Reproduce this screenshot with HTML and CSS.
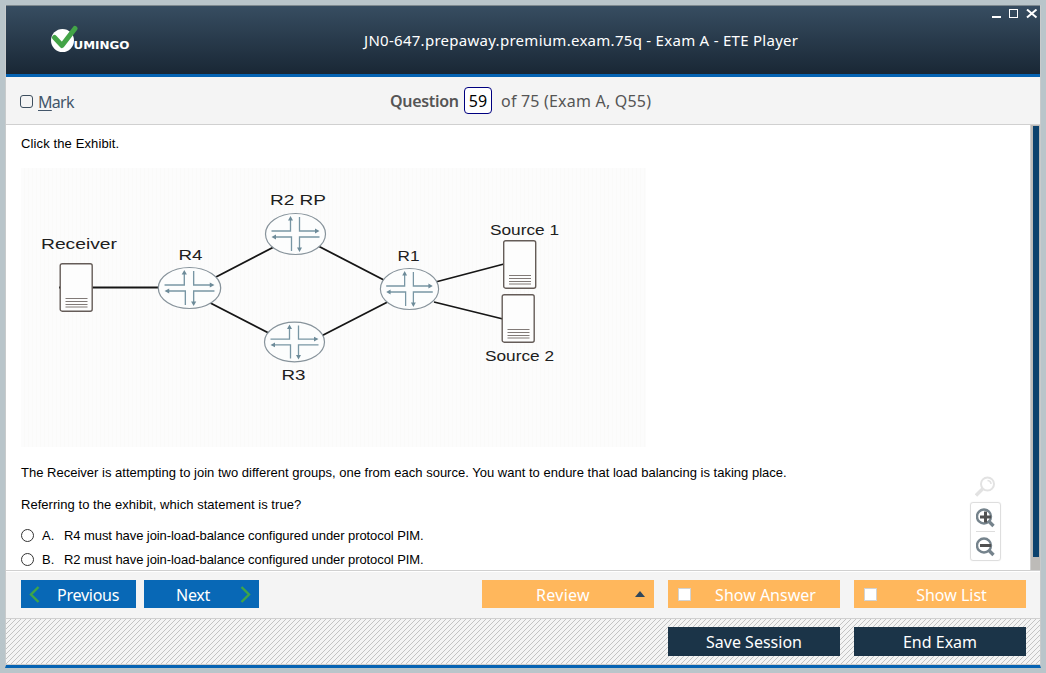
FILE: index.html
```html
<!DOCTYPE html>
<html lang="en">
<head>
<meta charset="utf-8">
<title>ETE Player</title>
<link rel="stylesheet" href="styles.css">
</head>
<body>
<svg class="defs" width="0" height="0" aria-hidden="true">
  <defs>
    <g id="router">
      <ellipse rx="30" ry="20.5" fill="#fcfdfd" stroke="#87939b" stroke-width="1.2"/>
      <g fill="none" stroke="#7896a4" stroke-width="1.3">
        <path d="M-24-3H-5V-15M4-17V-3H21M24 3H4V14M-4 17V3H-21"/>
      </g>
      <path d="M-5-18l-2.500 4.500h5zM24-3l-4.500-2.500v5zM4 18l-2.500-4.500h5zM-24 3l4.500-2.500v5z" fill="#6d8b99"/>
    </g>
    <g id="server">
      <rect x=".7" y=".7" width="32" height="47.500" rx="2" fill="#fdfdfd" stroke="#655c58" stroke-width="1.4"/>
      <path d="M6 35.500h22M6 38.500h22M6 41.500h22M6 44h22" stroke="#817a77" stroke-width="1"/>
    </g>
  </defs>
</svg>
<div class="window">
  <header class="titlebar">
    <svg class="logo" width="82" height="30" viewBox="0 0 82 30">
      <circle cx="12.500" cy="15.500" r="11.500" fill="#fff"/>
      <path d="M4.500 12.500L12 20.500L25 3.500" fill="none" stroke="#43a447" stroke-width="5" stroke-linecap="round" stroke-linejoin="round"/>
      <text class="logo-text" x="23.500" y="24" textLength="56" lengthAdjust="spacingAndGlyphs">UMINGO</text>
    </svg>
    <h1 class="title">JN0-647.prepaway.premium.exam.75q - Exam A - ETE Player</h1>
    <svg class="controls" width="46" height="11" viewBox="0 0 46 11" fill="none" stroke="#fff">
      <path d="M0 8H9" stroke-width="2"/>
      <rect x="17.500" y=".5" width="8" height="8"/>
      <path d="M35 .5L44.500 8.500M44.500 .5L35 8.500" stroke-width="2"/>
    </svg>
  </header>
  <section class="question-bar">
    <label class="mark"><span class="mark-box"></span><span class="mark-text"><u>M</u>ark</span></label>
    <div class="counter"><b class="counter-label">Question</b><span class="number">59</span><span class="total">of 75 (Exam A, Q55)</span></div>
  </section>
  <main class="content">
    <div class="document">
      <p class="line intro">Click the Exhibit.</p>
      <svg class="exhibit" width="625" height="279" viewBox="21 168 625 279">
        <defs>
          <pattern id="paper" width="4" height="8" patternUnits="userSpaceOnUse">
            <rect width="4" height="8" fill="#fcfcfc"/><path d="M.5 0V8" stroke="#fafaf9"/>
          </pattern>
        </defs>
        <rect x="21" y="168" width="625" height="279" fill="url(#paper)"/>
        <path d="M59 287.500H160M189 291L295 236M295 234L409 293M294 350L409 291M189 292L294 346M409 289L504 264M409 295M434 302L503 319" fill="none" stroke="#161616" stroke-width="1.800"/>
        <use href="#server" x="59.500" y="263"/>
        <use href="#server" x="503" y="240"/>
        <use href="#server" x="501.500" y="294"/>
        <use href="#router" transform="translate(189.500 288) scale(1.040 1)"/>
        <use href="#router" x="295.500" y="234"/>
        <use href="#router" transform="translate(409.500 289) scale(.970 1)"/>
        <use href="#router" transform="translate(294.500 342) scale(1 .970)"/>
        <g class="node-text">
          <text x="41" y="249" textLength="76" lengthAdjust="spacingAndGlyphs">Receiver</text>
          <text x="178.500" y="260" textLength="24" lengthAdjust="spacingAndGlyphs">R4</text>
          <text x="270" y="205" textLength="56" lengthAdjust="spacingAndGlyphs">R2 RP</text>
          <text x="397.500" y="261" textLength="22" lengthAdjust="spacingAndGlyphs">R1</text>
          <text x="281.500" y="380" textLength="24" lengthAdjust="spacingAndGlyphs">R3</text>
          <text x="490" y="235" textLength="69" lengthAdjust="spacingAndGlyphs">Source 1</text>
          <text x="485" y="361" textLength="69" lengthAdjust="spacingAndGlyphs">Source 2</text>
        </g>
      </svg>
      <p class="line setup">The Receiver is attempting to join two different groups, one from each source. You want to endure that load balancing is taking place.</p>
      <p class="line ask">Referring to the exhibit, which statement is true?</p>
      <div class="answer"><span class="radio"></span><span class="letter">A.</span><span class="line choice">R4 must have join-load-balance configured under protocol PIM.</span></div>
      <div class="answer"><span class="radio"></span><span class="letter">B.</span><span class="line choice">R2 must have join-load-balance configured under protocol PIM.</span></div>
    </div>
    <div class="scrollbar"><div class="thumb"></div></div>
    <div class="zoom">
      <svg width="20" height="21" viewBox="0 0 20 21" fill="none" stroke="#e2e2e2">
        <circle cx="12.500" cy="8" r="6.500" stroke-width="2"/><path d="M8 12.500L1 19.500" stroke-width="3.400"/><path d="M12.500 4.500Q16 5 16 8" stroke-width="1.500"/>
      </svg>
      <div class="zoom-panel">
        <svg width="20" height="20" viewBox="0 0 20 20" fill="none"><circle cx="8" cy="8.500" r="7" stroke="#75838c" stroke-width="2.400"/><path d="M12.500 13L17.500 18" stroke="#75838c" stroke-width="3.400"/><path d="M4 9H15M9.500 3.500V14.500" stroke="#505050" stroke-width="3"/></svg>
        <hr class="zoom-rule">
        <svg width="20" height="20" viewBox="0 0 20 20" fill="none"><circle cx="8" cy="8.500" r="7" stroke="#75838c" stroke-width="2.400"/><path d="M12.500 13L17.500 18" stroke="#75838c" stroke-width="3.400"/><path d="M4 8.500H15" stroke="#505050" stroke-width="3"/></svg>
      </div>
    </div>
  </main>
  <footer class="actions">
    <button class="btn nav prev"><svg width="11" height="17" viewBox="0 0 11 17"><path d="M9.500 1L2 8.500L9.500 16" fill="none" stroke="#3fa548" stroke-width="2.400"/></svg><span class="fit">Previous</span></button>
    <button class="btn nav next"><span class="fit">Next</span><svg width="11" height="17" viewBox="0 0 11 17"><path d="M1.500 1L9 8.500L1.500 16" fill="none" stroke="#3fa548" stroke-width="2.400"/></svg></button>
    <span class="spacer"></span>
    <button class="btn option review"><span class="fit">Review</span><span class="arrow"></span></button>
    <button class="btn option check"><span class="box"></span><span class="fit">Show Answer</span></button>
    <button class="btn option check"><span class="box"></span><span class="fit">Show List</span></button>
  </footer>
  <footer class="session">
    <svg class="hatch" width="1034" height="45" aria-hidden="true">
      <defs><pattern id="diagonal" width="5" height="5" patternUnits="userSpaceOnUse"><path d="M-1 6L6-1M-1 1L1-1M4 6L6 4" stroke="#bdbdbd" stroke-width=".9"/></pattern></defs>
      <rect width="1034" height="45" fill="url(#diagonal)"/>
    </svg>
    <div class="session-buttons">
      <button class="btn dark">Save Session</button>
      <button class="btn dark">End Exam</button>
    </div>
  </footer>
</div>
</body>
</html>
```
FILE: styles.css
```css
* { box-sizing: border-box; }
body { margin: 0; width: 1046px; height: 673px; padding: 5px; background: #b9c5ca; overflow: hidden; font-family: "Noto Sans", sans-serif; }
.defs { position: absolute; }
.window { width: 1036px; height: 663px; display: flex; flex-direction: column; border-left: 1px solid #c8cbcc; border-right: 1px solid #c8cbcc; border-bottom: 3px solid #0563b3; background: #fff; }
.titlebar { height: 72px; flex: none; display: flex; border-top: 1px solid #7e898f; border-bottom: 3px solid #0563b3; background: linear-gradient(#374d61, #192735); }
.logo { flex: none; margin: 19px 0 0 44px; }
.logo-text { font: bold 11px "DejaVu Sans", sans-serif; fill: #fff; }
.title { flex: 1; margin: 23px 0 0 232px; color: #fff; font-size: 15px; letter-spacing: .28px; line-height: 22px; font-weight: 400; white-space: nowrap; }
.controls { flex: none; margin: 3px 2px 0 0; }
.question-bar { height: 48px; flex: none; background: #f4f4f4; border-bottom: 1px solid #d0d0d0; display: flex; color: #525a60; }
.mark { display: flex; gap: 5px; width: 370px; padding: 15px 0 0 14px; font-size: 16px; line-height: 21px; color: #43566a; }
.mark-box { width: 13px; height: 13px; margin-top: 3px; border: 1px solid #3d4e5e; border-radius: 3px; }
.mark-text { letter-spacing: -.7px; }
.mark-text u { text-underline-offset: 2px; text-decoration-thickness: 1px; }
.counter { display: flex; padding: 10px 0 0 14px; font-size: 16px; line-height: 28px; color: #555; white-space: nowrap; }
.counter-label { font-weight: 600; width: 74px; letter-spacing: -.3px; }
.number { width: 28px; height: 27px; line-height: 27px; text-align: center; color: #000; background: #fff; border: 1px solid #000080; border-radius: 4px; }
.total { margin-left: 9px; letter-spacing: .2px; }
.content { height: 446px; flex: none; display: flex; position: relative; border-bottom: 1px solid #d0d0d0; overflow: hidden; }
.document { width: 1024px; flex: none; padding: 11px 0 0 15px; color: #000; font: 13px/16px "Liberation Sans", Arial, sans-serif; }
.line { margin: 0; white-space: nowrap; }
.intro { letter-spacing: .12px; }
.exhibit { display: block; margin-top: 16px; }
.node-text { font: 14px "Liberation Sans", sans-serif; fill: #202020; }
.setup { margin-top: 18px; letter-spacing: .01px; }
.ask { margin-top: 16px; letter-spacing: .04px; }
.choice { letter-spacing: -.075px; }
.answer { display: flex; height: 24px; align-items: center; }
.ask + .answer { margin-top: 11px; }
.radio { width: 13px; height: 13px; margin-bottom: 2px; border: 1px solid #333; border-radius: 50%; }
.letter { width: 22px; margin-left: 8px; }
.scrollbar { width: 10px; flex: none; background: #bdbbb8; border-left: 1px solid #d0d0d0; padding: 1px 0 0 2px; }
.thumb { width: 6px; height: 431px; background: #0c426d; }
.zoom { position: absolute; left: 964px; top: 351px; width: 31px; display: flex; flex-direction: column; align-items: center; }
.zoom > svg { margin-right: 2px; }
.zoom-panel { width: 31px; height: 59px; margin-top: 5px; padding: 5px; border: 1px solid #dedede; border-radius: 3px; box-shadow: 0 0 1px #ddd; }
.zoom-panel svg { display: block; }
.zoom-rule { border: 0; height: 1px; margin: 3px 0 5px; background: #ddd; }
.btn { border: 0; padding: 0; color: #fff; font: 16px/28px "Noto Sans", sans-serif; white-space: nowrap; }
.actions { height: 48px; flex: none; display: flex; align-items: flex-start; padding: 8px 14px 0 15px; background: #f4f4f4; border-top: 1px solid #fff; border-bottom: 1px solid #d0d0d0; }
.actions .fit { padding-top: 1px; }
.nav { width: 115px; height: 28px; display: flex; align-items: center; background: #0868b6; }
.prev { padding-left: 8px; gap: 17px; }
.prev .fit { letter-spacing: -.25px; }
.next { margin-left: 8px; padding: 0 8px 0 32px; justify-content: space-between; }
.next .fit { letter-spacing: -.25px; }
.spacer { flex: 1; }
.option { width: 172px; height: 28px; margin-left: 14px; background: #ffb75c; display: flex; align-items: center; }
.review { padding: 0 9px 0 54px; justify-content: space-between; }
.review .fit { letter-spacing: .3px; }
.arrow { border-left: 5px solid transparent; border-right: 5px solid transparent; border-bottom: 6px solid #2f465b; }
.check { padding-left: 10px; }
.check .fit { flex: 1; text-align: center; }
.box { width: 13px; height: 13px; border: 1px solid #d2d2d2; background: #fff; }
.session { flex: 1; position: relative; background: #f4f4f4; border-bottom: 1px solid #ccc; }
.hatch { position: absolute; left: 0; top: 0; }
.session-buttons { position: relative; display: flex; justify-content: flex-end; gap: 14px; padding: 8px 14px 0; }
.dark { width: 172px; height: 29px; background: #1b3448; }
```
